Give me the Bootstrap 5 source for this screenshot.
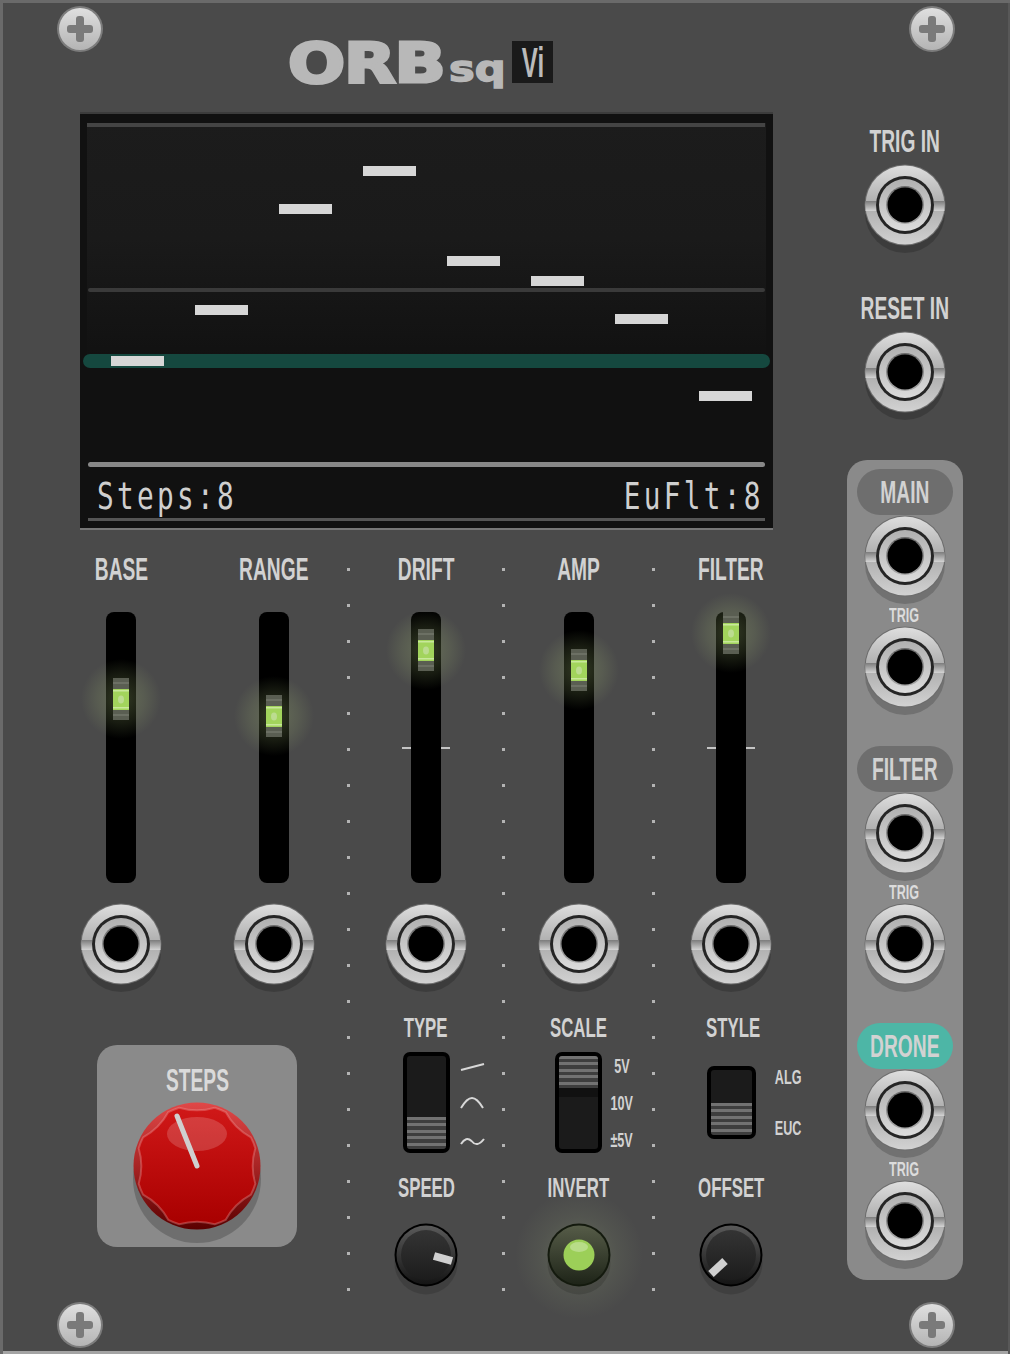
<!DOCTYPE html>
<html lang="en">
<head>
    <meta charset="UTF-8">
    <meta name="viewport" content="width=device-width, initial-scale=1.0">
    <title>ORBsq Vi</title>
    <link href="https://cdn.jsdelivr.net/npm/bootstrap@5.3.0/dist/css/bootstrap.min.css" rel="stylesheet">
    <style>
        body { background: #4a4a4a; }
        .rack-panel { width: 1010px; height: 1354px; background: #4a4a4a; overflow: hidden; box-shadow: inset 3px 3px 0 #6a6a6a, inset -2px 0 0 #585858, inset 0 -3px 0 #a4a4a4; }
        .left-area { width: 820px; flex: none; }
        .right-area { width: 190px; flex: none; padding: 125px 21px 0 0; }
        svg { display: block; overflow: visible; }

        .lbl { display: block; text-align: center; font-family: "Liberation Sans", sans-serif; font-weight: 700; font-size: 32px; line-height: 32px; height: 32px; color: #d2d2d2; white-space: nowrap; }
        .lbl > span { display: inline-block; transform: scaleX(.6); }
        .lbl-sm { font-size: 21px; line-height: 20px; height: 20px; }
        .lbl-md { font-size: 28px; }

        .screw { position: absolute; width: 46px; height: 46px; }
        .screw-tl { left: 57px; top: 6px; }
        .screw-tr { left: 909px; top: 6px; }
        .screw-bl { left: 57px; top: 1302px; }
        .screw-br { left: 909px; top: 1302px; }

        .dot-rule { position: absolute; top: 568px; width: 3px; height: 724px; background: repeating-linear-gradient(#b4b4b4 0 3px, transparent 3px 36px); }
        .dot-a { left: 347px; }
        .dot-b { left: 502px; }
        .dot-c { left: 652px; }

        .logo-row { height: 114px; padding: 41px 0 0 288px; }
        .logo-orb { width: 157px; font-family: "DejaVu Sans", sans-serif; font-weight: 700; font-size: 56px; line-height: 43px; color: #b8b8b8; -webkit-text-stroke: 3px #b8b8b8; letter-spacing: -1px; }
        .logo-orb > span { display: inline-block; transform: scaleX(1.2); transform-origin: left center; }
        .logo-sq { width: 55px; margin: 6px 0 0 4px; font-family: "DejaVu Sans", sans-serif; font-weight: 700; font-size: 36px; line-height: 43px; color: #b8b8b8; -webkit-text-stroke: 1.5px #b8b8b8; }
        .logo-sq > span { display: inline-block; transform: scaleX(1.2); transform-origin: left center; }
        .logo-vi { width: 41px; height: 42px; margin-left: 8px; background: #1a1a1a; color: #bbb; font-family: "Liberation Sans", sans-serif; font-weight: 700; font-size: 43px; line-height: 42px; text-align: center; }
        .logo-vi > span { display: inline-block; transform: scaleX(.56); }

        .screen { width: 693px; height: 416px; margin-left: 80px; background: linear-gradient(#1c1c1c 0, #1a1a1a 30%, #111 60%); border-bottom: 2px solid #777; box-shadow: 0 -2px 0 #3c3c3c; }
        .readout { height: 50px; padding: 0 9px 0 17px; font-family: "DejaVu Sans Mono", monospace; font-size: 37px; line-height: 58px; letter-spacing: 4.4px; color: #cfcfcf; }
        .readout span { display: inline-block; transform: scaleX(.75); transform-origin: left center; }
        .readout span + span { transform-origin: right center; }
        .screen-foot { height: 3px; margin: 0 8px; background: #555; }

        .fader-grid { display: grid; grid-template-columns: repeat(5, 152.5px); margin-left: 44.75px; padding-top: 23px; }
        .fader-track { width: 30px; height: 271px; margin: 27px 0 16px; background: #000; border-radius: 8px; }
        .fader-thumb { position: absolute; left: 7px; width: 16px; height: 42px; }
        .fader-thumb::before { content: ""; position: absolute; left: -32px; top: -19px; width: 80px; height: 80px; background: radial-gradient(closest-side, rgba(170,195,120,.3), rgba(170,195,120,.14) 60%, rgba(170,195,120,0)); }
        .fader-thumb svg { position: relative; }
        .fader-center::before { content: ""; position: absolute; left: -9px; top: 135px; width: 48px; height: 2px; background: linear-gradient(90deg, #c4c4c4 9px, transparent 9px 39px, #c4c4c4 39px); }

        .lower-row { display: grid; grid-template-columns: 305px repeat(3, 152.5px); margin: 17px 0 0 44.75px; }
        .steps-box { width: 200px; height: 202px; margin: 33px 0 0 52.25px; padding-top: 19px; background: #8a8a8a; border-radius: 20px; }
        .steps-box .lbl { color: #dadada; }
        .switch-row { display: grid; grid-template-columns: 52.75px 47px 1fr; height: 101px; margin: 8px 0 19px; }
        .switch-body { grid-column: 2; padding: 4px; background: #000; border-radius: 7px; align-self: center; }
        .switch-tall { height: 101px; }
        .switch-short { width: 49px; height: 73px; margin-left: -1px; }
        .switch-well { height: 100%; background: #1b1b1b; border-radius: 3px; overflow: hidden; }
        .switch-cap { height: 32px; background: repeating-linear-gradient(#727272 0 3px, #3e3e3e 3px 6.4px); }
        .switch-shade { height: 9px; background: #111; }
        .switch-notes { color: #d2d2d2; width: 40px; padding-top: 3px; gap: 15px; }
        .switch-notes .lbl { font-size: 21px; line-height: 22px; height: 22px; }
        .notes-style { width: 46px; margin-left: 11px; padding-top: 14px; gap: 29px; }
        .type-icons { margin-left: 10px; }
        .knob-holder { margin-top: 16px; }
        .lbl-nudge { padding-left: 4px; }

        .jack-svg { width: 90px; height: 96px; }
        .port-group { width: 116px; margin: 37px 0 0 0; padding: 9px 0 8px; background: #8a8a8a; border-radius: 20px; }
        .port-pill { width: 96px; height: 46px; margin-bottom: -4px; border-radius: 23px; background: #6e6e6e; }
        .port-pill .lbl { line-height: 46px; height: 46px; }
        .pill-teal { background: #4db6a6; }
        .port-gap { margin-top: 28px; }
        .port-trig { margin: -2px 0 -3px; color: #dcdcdc; }
        .right-area .lbl-gap { margin-top: 36px; }
        .right-area .jack-svg { margin-top: 3px; }
        .port-group .jack-svg { margin-top: 0; }
    </style>
</head>
<body class="m-0">
    <!-- shared parts -->
    <svg width="0" height="0" class="position-absolute">
        <defs>
            <linearGradient id="ringGrad" x1="0" y1="0" x2="0" y2="1">
                <stop offset="0" stop-color="#dedede"/><stop offset=".5" stop-color="#acacac"/><stop offset="1" stop-color="#d2d2d2"/>
            </linearGradient>
            <linearGradient id="innerGrad" x1="0" y1="0" x2="0" y2="1">
                <stop offset="0" stop-color="#b0b0b0"/><stop offset="1" stop-color="#dcdcdc"/>
            </linearGradient>
            <linearGradient id="lipGrad" x1="0" y1="0" x2="0" y2="1">
                <stop offset="0" stop-color="#6a6a6a"/><stop offset="1" stop-color="#a8a8a8"/>
            </linearGradient>
            <linearGradient id="notchGrad" x1="0" y1="0" x2="0" y2="1">
                <stop offset="0" stop-color="#7c7c7c"/><stop offset="1" stop-color="#d4d4d4"/>
            </linearGradient>
            <linearGradient id="screwGrad" x1="0" y1="0" x2="0" y2="1">
                <stop offset="0" stop-color="#dfdfdf"/><stop offset="1" stop-color="#b4b4b4"/>
            </linearGradient>
            <linearGradient id="knobRim" x1="0" y1="0" x2="0" y2="1">
                <stop offset="0" stop-color="#5a5a5a"/><stop offset="1" stop-color="#141414"/>
            </linearGradient>
            <linearGradient id="knobFace" x1="0" y1="0" x2="0" y2="1">
                <stop offset="0" stop-color="#343434"/><stop offset="1" stop-color="#1c1c1c"/>
            </linearGradient>
            <linearGradient id="invertFace" x1="0" y1="0" x2="0" y2="1">
                <stop offset="0" stop-color="#565c48"/><stop offset="1" stop-color="#1e2418"/>
            </linearGradient>
            <linearGradient id="redRim" x1="0" y1="0" x2="0" y2="1">
                <stop offset="0" stop-color="#e04848"/><stop offset=".5" stop-color="#a82424"/><stop offset="1" stop-color="#5a0000"/>
            </linearGradient>
            <linearGradient id="redFace" x1="0" y1="0" x2="0" y2="1">
                <stop offset="0" stop-color="#d01818"/><stop offset="1" stop-color="#a80000"/>
            </linearGradient>
            <radialGradient id="ledGlow">
                <stop offset="0" stop-color="#b0c888" stop-opacity=".26"/><stop offset=".6" stop-color="#b0c888" stop-opacity=".08"/><stop offset="1" stop-color="#b0c888" stop-opacity="0"/>
            </radialGradient>
            <symbol id="jack" viewBox="0 0 90 96">
                <circle cx="45" cy="53" r="40" fill="#000" fill-opacity=".18"/>
                <circle cx="45" cy="45" r="40.5" fill="#6c6c6c"/>
                <circle cx="45" cy="45" r="39.5" fill="url(#ringGrad)"/>
                <rect x="5.5" y="41" width="11" height="10" fill="url(#notchGrad)"/>
                <rect x="73.5" y="41" width="11" height="10" fill="url(#notchGrad)"/>
                <circle cx="45" cy="45" r="29" fill="#252525"/>
                <circle cx="45" cy="45" r="26" fill="url(#innerGrad)"/>
                <circle cx="45" cy="45" r="19" fill="url(#lipGrad)"/>
                <circle cx="45" cy="45" r="17.5" fill="#000"/>
            </symbol>
            <symbol id="screw" viewBox="0 0 46 46">
                <circle cx="23" cy="23" r="23" fill="#7c7c7c"/>
                <circle cx="23" cy="23" r="21" fill="url(#screwGrad)"/>
                <rect x="10" y="19" width="26" height="8" rx="3" fill="#7a7a7a"/>
                <rect x="19" y="10" width="8" height="26" rx="3" fill="#7a7a7a"/>
            </symbol>
            <symbol id="thumb" viewBox="0 0 16 42">
                <rect width="16" height="11" fill="#5a5e52"/>
                <rect y="4" width="16" height="2" fill="#6c7064"/>
                <rect y="31" width="16" height="11" fill="#5a5e52"/>
                <rect y="36" width="16" height="2" fill="#6c7064"/>
                <rect y="11" width="16" height="21" fill="#a2d45c"/>
                <rect y="12" width="16" height="1.5" fill="#c8e89a"/>
                <rect y="29" width="16" height="1.5" fill="#c8e89a"/>
                <ellipse cx="8" cy="21.5" rx="3" ry="4" fill="#bcdc90"/>
            </symbol>
            <symbol id="knobBase" viewBox="0 0 70 78">
                <circle cx="35" cy="43" r="31.5" fill="#000" fill-opacity=".14"/>
                <circle cx="35" cy="35" r="31.5" fill="#000"/>
                <circle cx="35" cy="35" r="29.5" fill="url(#knobRim)"/>
                <circle cx="35" cy="35" r="25" fill="url(#knobFace)"/>
            </symbol>
        </defs>
    </svg>

    <div class="rack-panel position-relative d-flex">
        <svg class="screw screw-tl"><use href="#screw"/></svg>
        <svg class="screw screw-tr"><use href="#screw"/></svg>
        <svg class="screw screw-bl"><use href="#screw"/></svg>
        <svg class="screw screw-br"><use href="#screw"/></svg>
        <div class="dot-rule dot-a"></div>
        <div class="dot-rule dot-b"></div>
        <div class="dot-rule dot-c"></div>

        <div class="left-area">
            <div class="logo-row d-flex align-items-start">
                <span class="logo-orb"><span>ORB</span></span>
                <span class="logo-sq"><span>sq</span></span>
                <span class="logo-vi"><span>Vi</span></span>
            </div>

            <div class="screen">
                <svg width="693" height="354" viewBox="0 0 693 354">
                    <rect width="693" height="9" fill="#111"/>
                    <rect x="7" y="9" width="678" height="4" fill="#444"/>
                    <rect x="0" y="9" width="7" height="345" fill="#111"/>
                    <rect x="686" y="9" width="7" height="345" fill="#111"/>
                    <rect x="8" y="174" width="677" height="4" rx="2" fill="#3a3a3a"/>
                    <rect x="3" y="240" width="687" height="14" rx="7" fill="#15483f"/>
                    <rect x="8" y="348" width="677" height="5" rx="2.5" fill="#888"/>
                    <g fill="#d6d6d6">
                        <rect x="31" y="242" width="53" height="10"/>
                        <rect x="115" y="191" width="53" height="10"/>
                        <rect x="199" y="90" width="53" height="10"/>
                        <rect x="283" y="52" width="53" height="10"/>
                        <rect x="367" y="142" width="53" height="10"/>
                        <rect x="451" y="162" width="53" height="10"/>
                        <rect x="535" y="200" width="53" height="10"/>
                        <rect x="619" y="277" width="53" height="10"/>
                    </g>
                </svg>
                <div class="readout d-flex justify-content-between">
                    <span>Steps:8</span>
                    <span>EuFlt:8</span>
                </div>
                <div class="screen-foot"></div>
            </div>

            <div class="fader-grid">
                <div class="d-flex flex-column align-items-center">
                    <span class="lbl"><span>BASE</span></span>
                    <div class="fader-track position-relative"><div class="fader-thumb" style="top:66px"><svg width="16" height="42"><use href="#thumb"/></svg></div></div>
                    <svg class="jack-svg"><use href="#jack"/></svg>
                </div>
                <div class="d-flex flex-column align-items-center">
                    <span class="lbl"><span>RANGE</span></span>
                    <div class="fader-track position-relative"><div class="fader-thumb" style="top:83px"><svg width="16" height="42"><use href="#thumb"/></svg></div></div>
                    <svg class="jack-svg"><use href="#jack"/></svg>
                </div>
                <div class="d-flex flex-column align-items-center">
                    <span class="lbl"><span>DRIFT</span></span>
                    <div class="fader-track fader-center position-relative"><div class="fader-thumb" style="top:17px"><svg width="16" height="42"><use href="#thumb"/></svg></div></div>
                    <svg class="jack-svg"><use href="#jack"/></svg>
                </div>
                <div class="d-flex flex-column align-items-center">
                    <span class="lbl"><span>AMP</span></span>
                    <div class="fader-track position-relative"><div class="fader-thumb" style="top:37px"><svg width="16" height="42"><use href="#thumb"/></svg></div></div>
                    <svg class="jack-svg"><use href="#jack"/></svg>
                </div>
                <div class="d-flex flex-column align-items-center">
                    <span class="lbl"><span>FILTER</span></span>
                    <div class="fader-track fader-center position-relative"><div class="fader-thumb" style="top:0px"><svg width="16" height="42"><use href="#thumb"/></svg></div></div>
                    <svg class="jack-svg"><use href="#jack"/></svg>
                </div>
            </div>

            <div class="lower-row">
                <div>
                    <div class="steps-box d-flex flex-column align-items-center">
                        <span class="lbl"><span>STEPS</span></span>
                        <svg width="140" height="150" viewBox="-70 -70 140 150">
                            <circle cx="0" cy="13" r="64" fill="#000" fill-opacity=".2"/>
                            <circle r="63.5" fill="url(#redRim)"/>
                            <path d="M58.3 -17.8Q53 0 58.3 17.8A61 61 0 0 1 53.9 28.6Q37.5 37.5 28.6 53.9A61 61 0 0 1 17.8 58.3Q0 53 -17.8 58.3A61 61 0 0 1 -28.6 53.9Q-37.5 37.5 -53.9 28.6A61 61 0 0 1 -58.3 17.8Q-53 0 -58.3 -17.8A61 61 0 0 1 -53.9 -28.6Q-37.5 -37.5 -28.6 -53.9A61 61 0 0 1 -17.8 -58.3Q0 -53 17.8 -58.3A61 61 0 0 1 28.6 -53.9Q37.5 -37.5 53.9 -28.6A61 61 0 0 1 58.3 -17.8Z" fill="url(#redFace)" stroke="#f0a0a0" stroke-opacity=".35" stroke-width="2"/>
                            <ellipse cx="0" cy="-32" rx="30" ry="17" fill="#fff" fill-opacity=".17"/>
                            <line x1="-20" y1="-50" x2="0" y2="0" stroke="#d0d0d0" stroke-width="5" stroke-linecap="round"/>
                        </svg>
                    </div>
                </div>

                <div class="d-flex flex-column">
                    <span class="lbl lbl-md"><span>TYPE</span></span>
                    <div class="switch-row">
                        <div class="switch-body switch-tall"><div class="switch-well d-flex flex-column justify-content-end"><div class="switch-cap"></div></div></div>
                        <svg class="type-icons" width="26" height="101" viewBox="0 0 26 101" fill="none" stroke="#d8d8d8" stroke-width="2">
                            <path d="M1 18 L24 12"/>
                            <path d="M1 56 Q7 46 12 46 Q17 46 23 56"/>
                            <path d="M1 92 Q6 84 11.500 89 Q17 96 24 87"/>
                        </svg>
                    </div>
                    <span class="lbl lbl-md"><span>SPEED</span></span>
                    <div class="knob-holder d-flex justify-content-center">
                        <svg width="70" height="78" viewBox="0 0 70 78">
                            <use href="#knobBase" width="70" height="78"/>
                            <line x1="43" y1="36" x2="61" y2="41" stroke="#d0d0d0" stroke-width="8"/>
                        </svg>
                    </div>
                </div>

                <div class="d-flex flex-column">
                    <span class="lbl lbl-md"><span>SCALE</span></span>
                    <div class="switch-row">
                        <div class="switch-body switch-tall"><div class="switch-well"><div class="switch-cap"></div><div class="switch-shade"></div></div></div>
                        <div class="switch-notes d-flex flex-column">
                            <span class="lbl"><span>5V</span></span>
                            <span class="lbl"><span>10V</span></span>
                            <span class="lbl"><span>±5V</span></span>
                        </div>
                    </div>
                    <span class="lbl lbl-md"><span>INVERT</span></span>
                    <div class="knob-holder d-flex justify-content-center">
                        <svg width="70" height="78" viewBox="0 0 70 78">
                            <circle cx="35" cy="35" r="64" fill="url(#ledGlow)"/>
                            <circle cx="35" cy="43" r="31.5" fill="#000" fill-opacity=".14"/>
                            <circle cx="35" cy="35" r="31.5" fill="#141a0e"/>
                            <circle cx="35" cy="35" r="29.5" fill="url(#invertFace)"/>
                            <circle cx="35" cy="35" r="15.500" fill="#9ccf58"/>
                            <ellipse cx="35" cy="27" rx="9" ry="5" fill="#d0e8b0" fill-opacity=".55"/>
                        </svg>
                    </div>
                </div>

                <div class="d-flex flex-column">
                    <span class="lbl lbl-md lbl-nudge"><span>STYLE</span></span>
                    <div class="switch-row">
                        <div class="switch-body switch-short"><div class="switch-well d-flex flex-column justify-content-end"><div class="switch-cap"></div></div></div>
                        <div class="switch-notes notes-style d-flex flex-column">
                            <span class="lbl"><span>ALG</span></span>
                            <span class="lbl"><span>EUC</span></span>
                        </div>
                    </div>
                    <span class="lbl lbl-md"><span>OFFSET</span></span>
                    <div class="knob-holder d-flex justify-content-center">
                        <svg width="70" height="78" viewBox="0 0 70 78">
                            <use href="#knobBase" width="70" height="78"/>
                            <line x1="29" y1="41" x2="15" y2="54" stroke="#d0d0d0" stroke-width="8"/>
                        </svg>
                    </div>
                </div>
            </div>
        </div>

        <div class="right-area d-flex flex-column align-items-center">
            <span class="lbl"><span>TRIG IN</span></span>
            <svg class="jack-svg"><use href="#jack"/></svg>
            <span class="lbl lbl-gap"><span>RESET IN</span></span>
            <svg class="jack-svg"><use href="#jack"/></svg>

            <div class="port-group d-flex flex-column align-items-center">
                <div class="port-pill d-flex justify-content-center"><span class="lbl"><span>MAIN</span></span></div>
                <svg class="jack-svg"><use href="#jack"/></svg>
                <span class="lbl lbl-sm port-trig"><span>TRIG</span></span>
                <svg class="jack-svg"><use href="#jack"/></svg>

                <div class="port-pill port-gap d-flex justify-content-center"><span class="lbl"><span>FILTER</span></span></div>
                <svg class="jack-svg"><use href="#jack"/></svg>
                <span class="lbl lbl-sm port-trig"><span>TRIG</span></span>
                <svg class="jack-svg"><use href="#jack"/></svg>

                <div class="port-pill pill-teal port-gap d-flex justify-content-center"><span class="lbl"><span>DRONE</span></span></div>
                <svg class="jack-svg"><use href="#jack"/></svg>
                <span class="lbl lbl-sm port-trig"><span>TRIG</span></span>
                <svg class="jack-svg"><use href="#jack"/></svg>
            </div>
        </div>
    </div>

    <script src="https://cdn.jsdelivr.net/npm/bootstrap@5.3.0/dist/js/bootstrap.bundle.min.js"></script>
</body>
</html>
